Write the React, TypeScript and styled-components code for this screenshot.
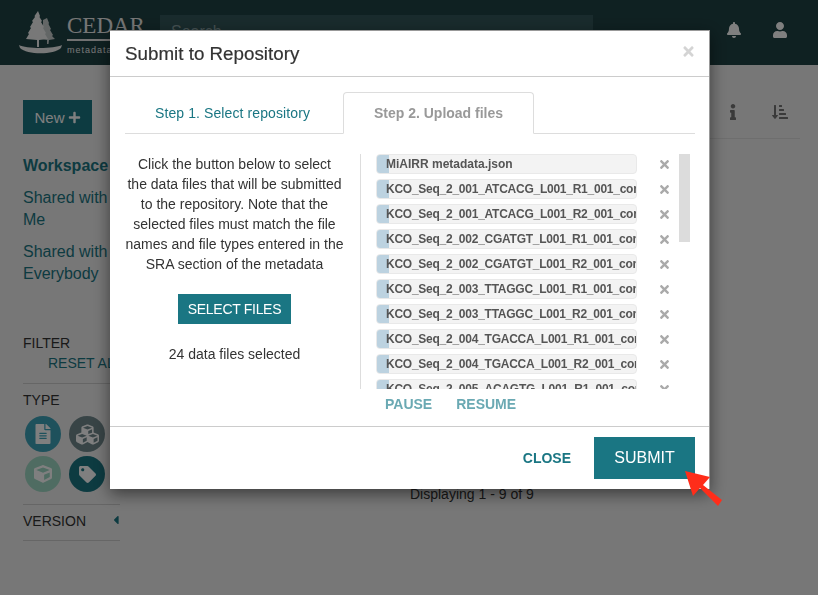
import React from 'react';
import styled, { createGlobalStyle } from 'styled-components';
import {
  FaBell,
  FaCaretLeft,
  FaCube,
  FaCubes,
  FaFileAlt,
  FaInfo,
  FaPlus,
  FaSortAmountDownAlt,
  FaTag,
  FaTimes,
  FaUser,
} from 'react-icons/fa';

const GlobalStyle = createGlobalStyle`
  html, body {
    margin: 0;
    padding: 0;
    height: 595px;
    overflow: hidden;
    background: #eeeeee;
    font-family: "Liberation Sans", Arial, sans-serif;
    color: #333;
  }
  * {
    box-sizing: border-box;
  }
`;

const Page = styled.div`
  width: 818px;
  height: 595px;
  overflow: hidden;
`;

const TopBar = styled.header`
  display: flex;
  align-items: flex-start;
  height: 65px;
  background: #1f4244;
  padding: 10px 0 0 18px;
`;

const Brand = styled.div`
  display: flex;
  width: 142px;
  flex: none;
`;

const BrandText = styled.div`
  display: flex;
  flex-direction: column;
  margin-left: 3px;
  padding-top: 3px;
  color: #ededed;
`;

const BrandName = styled.span`
  font-family: "Liberation Serif", serif;
  font-size: 23px;
  line-height: 26px;
  border-bottom: 2px solid #e4e4e4;
`;

const BrandSub = styled.span`
  font-size: 9px;
  line-height: 13px;
  letter-spacing: 1px;
  margin-top: 3px;
  white-space: nowrap;
`;

const SearchBox = styled.div`
  width: 433px;
  height: 36px;
  margin-top: 5px;
  padding: 8px 11px;
  background: #33575a;
  color: #8aa2a4;
  font-size: 16px;
  flex: none;
`;

const TopIcons = styled.div`
  display: flex;
  gap: 30px;
  margin-left: 133px;
  padding-top: 12px;
  color: #fff;
  font-size: 16px;
`;

const Content = styled.div`
  display: flex;
`;

const Sidebar = styled.aside`
  width: 97px;
  margin-left: 23px;
  padding-top: 35px;
  flex: none;
`;

const NewButton = styled.div`
  display: flex;
  align-items: center;
  justify-content: center;
  gap: 3px;
  width: 69px;
  height: 34px;
  background: #1a7683;
  color: #fff;
  font-size: 15px;
`;

const NavList = styled.nav`
  display: flex;
  flex-direction: column;
  margin-top: 21px;
  gap: 10px;
`;

const NavItem = styled.a<{ $active?: boolean }>`
  color: #1a7683;
  font-size: 16px;
  line-height: 22px;
  font-weight: ${(p) => (p.$active ? 'bold' : 'normal')};
  white-space: ${(p) => (p.$active ? 'nowrap' : 'normal')};
`;

const FilterTitle = styled.div`
  margin-top: 48px;
  font-size: 14px;
  line-height: 20px;
`;

const ResetLink = styled.div`
  padding-left: 25px;
  font-size: 14px;
  line-height: 20px;
  color: #1a7683;
  white-space: nowrap;
`;

const FilterSection = styled.div`
  border-top: 1px solid #ccc;
  margin-top: 10px;
  padding-top: 6px;
  font-size: 14px;
  line-height: 20px;
`;

const TypeGrid = styled.div`
  display: grid;
  grid-template-columns: 36px 36px;
  gap: 4px 8px;
  margin: 6px 0 0 2px;
`;

const TypeIcon = styled.div<{ $bg: string }>`
  display: flex;
  align-items: center;
  justify-content: center;
  width: 36px;
  height: 36px;
  border-radius: 50%;
  background: ${(p) => p.$bg};
  color: #fff;
`;

const VersionRow = styled.div`
  display: flex;
  align-items: center;
  justify-content: space-between;
  height: 37px;
  margin-top: 12px;
  padding-bottom: 3px;
  border-top: 1px solid #ccc;
  border-bottom: 1px solid #ccc;
  font-size: 14px;
  color: #333;
  svg {
    color: #1a7683;
    margin: -3px -3px 0 0;
    font-size: 14px;
  }
`;

const Main = styled.main`
  flex: 1;
  display: flex;
  flex-direction: column;
  padding: 39px 18px 0 0;
`;

const MainTools = styled.div`
  display: flex;
  justify-content: flex-end;
  gap: 31px;
  color: #747474;
  font-size: 16px;
  padding: 0 12px 18px 0;
  border-bottom: 1px solid #ddd;
`;

const Displaying = styled.div`
  margin: 345px 0 0 290px;
  font-size: 14px;
  line-height: 20px;
`;

const Backdrop = styled.div`
  position: fixed;
  inset: 0;
  background: rgba(0, 0, 0, 0.5);
`;

const Modal = styled.div`
  position: fixed;
  left: 110px;
  top: 30px;
  width: 600px;
  height: 459px;
  background: #fff;
  border: 1px solid #999;
  border-width: 1px 1px 0 0;
  box-shadow: 0 5px 15px rgba(0, 0, 0, 0.5);
  display: flex;
  flex-direction: column;
`;

const ModalHeader = styled.div`
  display: flex;
  align-items: center;
  justify-content: space-between;
  height: 46px;
  padding: 0 15px;
  border-bottom: 1px solid #ccc;
  flex: none;
`;

const ModalTitle = styled.h4`
  margin: 0;
  font-size: 18.8px;
  font-weight: normal;
  color: #333;
  -webkit-text-stroke: 0.2px #333;
`;

const CloseX = styled.span`
  display: flex;
  color: #d4d4d4;
  font-size: 15px;
  margin: -4px -2px 0 0;
`;

const ModalBody = styled.div`
  flex: 1;
  display: flex;
  flex-direction: column;
  padding: 15px 14px 0 15px;
`;

const Tabs = styled.div`
  display: flex;
  height: 42px;
  border-bottom: 1px solid #ddd;
  flex: none;
`;

const Tab = styled.div<{ $active?: boolean }>`
  display: flex;
  align-items: center;
  justify-content: center;
  height: 42px;
  width: ${(p) => (p.$active ? '191px' : '218px')};
  padding-right: ${(p) => (p.$active ? '0' : '3px')};
  font-size: 14px;
  letter-spacing: ${(p) => (p.$active ? '0' : '0.1px')};
  color: ${(p) => (p.$active ? '#999' : '#1a7683')};
  font-weight: ${(p) => (p.$active ? 'bold' : 'normal')};
  background: ${(p) => (p.$active ? '#fff' : 'transparent')};
  border: ${(p) => (p.$active ? '1px solid #ddd' : 'none')};
  border-bottom: ${(p) => (p.$active ? '1px solid #fff' : 'none')};
  border-radius: 4px 4px 0 0;
`;

const UploadArea = styled.div`
  display: flex;
  margin-top: 20px;
`;

const Instructions = styled.div`
  width: 236px;
  height: 235px;
  flex: none;
  display: flex;
  flex-direction: column;
  align-items: center;
  padding-right: 16px;
  border-right: 1px solid #ddd;
  font-size: 14px;
  line-height: 20px;
  text-align: center;
  color: #333;
`;

const InstructionText = styled.div`
  white-space: nowrap;
`;

const SelectButton = styled.div`
  display: flex;
  align-items: center;
  justify-content: center;
  width: 113px;
  height: 30px;
  margin-top: 20px;
  background: #1a7683;
  color: #fff;
  font-size: 14px;
  letter-spacing: -0.3px;
`;

const SelectedCount = styled.div`
  margin-top: 20px;
`;

const FilesPane = styled.div`
  display: flex;
  height: 235px;
  overflow: hidden;
  margin-left: 15px;
`;

const FileList = styled.div`
  display: flex;
  flex-direction: column;
  gap: 5px;
  width: 261px;
  flex: none;
`;

const FileRow = styled.div<{ $tight: boolean }>`
  position: relative;
  height: 20px;
  flex: none;
  overflow: hidden;
  border-radius: 4px;
  background: #f3f3f3;
  border: 1px solid #e9e9e9;
  padding-left: 9px;
  font-size: 12px;
  font-weight: bold;
  line-height: 18px;
  letter-spacing: ${(p) => (p.$tight ? '-0.25px' : '0')};
  color: #555;
  white-space: nowrap;
`;

const FileProgress = styled.span`
  position: absolute;
  left: 0;
  top: 0;
  bottom: 0;
  width: 12px;
  background: #bcd2e0;
`;

const FileName = styled.span`
  position: relative;
`;

const RemoveList = styled.div`
  display: flex;
  flex-direction: column;
  gap: 5px;
  width: 42px;
  padding-left: 12px;
  flex: none;
`;

const RemoveIcon = styled.div`
  display: flex;
  align-items: center;
  justify-content: center;
  width: 30px;
  height: 20px;
  flex: none;
  color: #aaa;
  font-size: 13px;
`;

const ScrollThumb = styled.div`
  width: 11px;
  height: 88px;
  background: #dcdcdc;
  flex: none;
`;

const UploadActions = styled.div`
  display: flex;
  gap: 24px;
  margin: 6px 0 0 260px;
  font-size: 14px;
  line-height: 18px;
  font-weight: bold;
  color: #6aa9b3;
`;

const ModalFooter = styled.div`
  display: flex;
  align-items: center;
  justify-content: flex-end;
  gap: 23px;
  height: 63px;
  padding: 0 14px;
  border-top: 1px solid #ccc;
  flex: none;
`;

const CloseButton = styled.span`
  font-size: 14px;
  font-weight: bold;
  color: #1a7683;
`;

const SubmitButton = styled.div`
  display: flex;
  align-items: center;
  justify-content: center;
  width: 101px;
  height: 42px;
  background: #1a7683;
  color: #fff;
  font-size: 16px;
`;

const Callout = styled.svg`
  position: fixed;
  left: 684px;
  top: 468px;
  width: 40px;
  height: 40px;
`;

const files = [
  'MiAIRR metadata.json',
  'KCO_Seq_2_001_ATCACG_L001_R1_001_complete.fastq',
  'KCO_Seq_2_001_ATCACG_L001_R2_001_complete.fastq',
  'KCO_Seq_2_002_CGATGT_L001_R1_001_complete.fastq',
  'KCO_Seq_2_002_CGATGT_L001_R2_001_complete.fastq',
  'KCO_Seq_2_003_TTAGGC_L001_R1_001_complete.fastq',
  'KCO_Seq_2_003_TTAGGC_L001_R2_001_complete.fastq',
  'KCO_Seq_2_004_TGACCA_L001_R1_001_complete.fastq',
  'KCO_Seq_2_004_TGACCA_L001_R2_001_complete.fastq',
  'KCO_Seq_2_005_ACAGTG_L001_R1_001_complete.fastq',
];

const TreeLogo = () => (
  <svg width="46" height="44" viewBox="0 0 46 44" fill="#f0f0f0">
    <path d="M29 8 L31 13 L30.5 14 L33 19 L32 20 L35 25 L34 26 L37 29 L31 30 L30.5 34 L29 34 L29 30 L25 29 L25 10 Z" opacity="0.8" />
    <path d="M20 1 L22 6 L21.5 7 L24 11 L23 12 L26 17 L25 18 L28 23 L27 24 L30 29 L21 30 L21 37 L19 37 L19 30 L8 29 L11 24 L10 23 L13 18 L12 17 L15 12 L14 11 L17 7 L16.5 6 Z" />
    <path d="M1 35 C8 39 36 39 44 35 L43 38 C36 45 9 45 2 38 Z" />
  </svg>
);

export default function App() {
  return (
    <Page>
      <GlobalStyle />
      <TopBar>
        <Brand>
          <TreeLogo />
          <BrandText>
            <BrandName>CEDAR</BrandName>
            <BrandSub>metadatacenter</BrandSub>
          </BrandText>
        </Brand>
        <SearchBox>Search</SearchBox>
        <TopIcons>
          <FaBell />
          <FaUser />
        </TopIcons>
      </TopBar>
      <Content>
        <Sidebar>
          <NewButton>
            New <FaPlus size={13} />
          </NewButton>
          <NavList>
            <NavItem $active>Workspace</NavItem>
            <NavItem>Shared with Me</NavItem>
            <NavItem>Shared with Everybody</NavItem>
          </NavList>
          <FilterTitle>FILTER</FilterTitle>
          <ResetLink>RESET ALL</ResetLink>
          <FilterSection>
            TYPE
            <TypeGrid>
              <TypeIcon $bg="#3ca2b8">
                <FaFileAlt size={20} />
              </TypeIcon>
              <TypeIcon $bg="#71898d">
                <FaCubes size={23} />
              </TypeIcon>
              <TypeIcon $bg="#9fd8c4">
                <FaCube size={18} />
              </TypeIcon>
              <TypeIcon $bg="#1a7683">
                <FaTag size={17} />
              </TypeIcon>
            </TypeGrid>
          </FilterSection>
          <VersionRow>
            VERSION
            <FaCaretLeft />
          </VersionRow>
        </Sidebar>
        <Main>
          <MainTools>
            <FaInfo />
            <FaSortAmountDownAlt />
          </MainTools>
          <Displaying>Displaying 1 - 9 of 9</Displaying>
        </Main>
      </Content>
      <Backdrop />
      <Modal>
        <ModalHeader>
          <ModalTitle>Submit to Repository</ModalTitle>
          <CloseX>
            <FaTimes />
          </CloseX>
        </ModalHeader>
        <ModalBody>
          <Tabs>
            <Tab>Step 1. Select repository</Tab>
            <Tab $active>Step 2. Upload files</Tab>
          </Tabs>
          <UploadArea>
            <Instructions>
              <InstructionText>
                Click the button below to select
                <br />
                the data files that will be submitted
                <br />
                to the repository. Note that the
                <br />
                selected files must match the file
                <br />
                names and file types entered in the
                <br />
                SRA section of the metadata
              </InstructionText>
              <SelectButton>SELECT FILES</SelectButton>
              <SelectedCount>24 data files selected</SelectedCount>
            </Instructions>
            <FilesPane>
              <FileList>
                {files.map((name) => (
                  <FileRow key={name} $tight={name.startsWith('KCO')}>
                    <FileProgress />
                    <FileName>{name}</FileName>
                  </FileRow>
                ))}
              </FileList>
              <RemoveList>
                {files.map((name) => (
                  <RemoveIcon key={name}>
                    <FaTimes />
                  </RemoveIcon>
                ))}
              </RemoveList>
              <ScrollThumb />
            </FilesPane>
          </UploadArea>
          <UploadActions>
            <span>PAUSE</span>
            <span>RESUME</span>
          </UploadActions>
        </ModalBody>
        <ModalFooter>
          <CloseButton>CLOSE</CloseButton>
          <SubmitButton>SUBMIT</SubmitButton>
        </ModalFooter>
      </Modal>
      <Callout viewBox="0 0 40 40">
        <path d="M1 3 L26 9 L19 17 L38 32 L34 38 L16 20 L9 28 Z" fill="#ff2d1a" />
      </Callout>
    </Page>
  );
}
